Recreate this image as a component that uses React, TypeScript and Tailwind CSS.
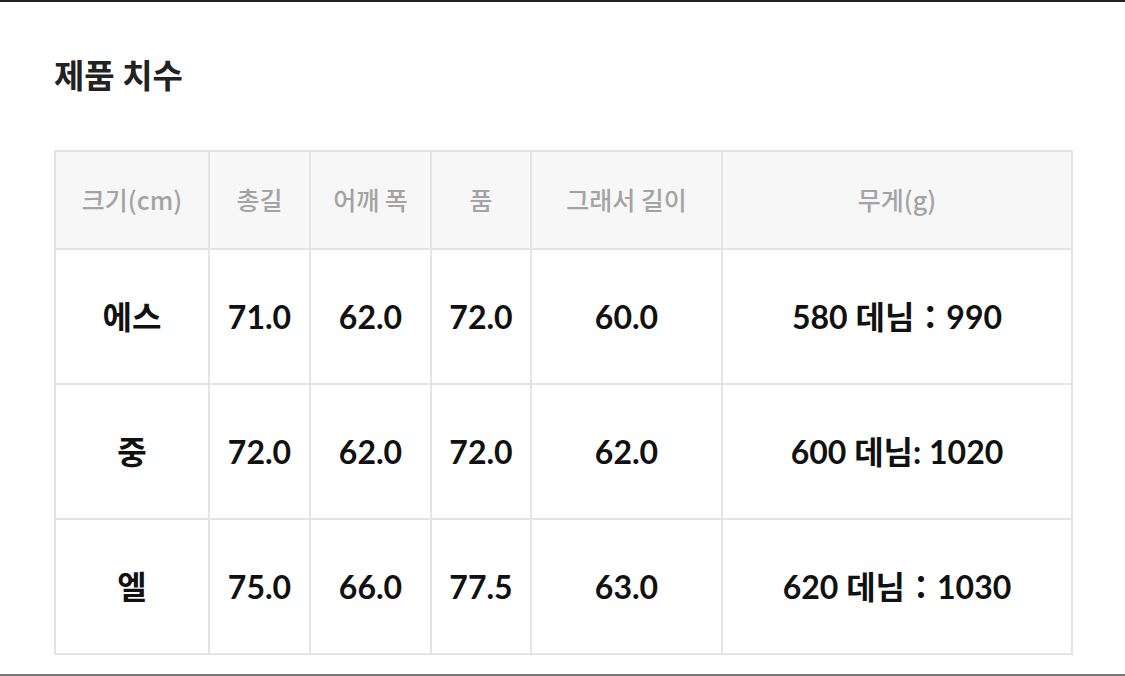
const headers = ["크기(cm)", "총길", "어깨 폭", "품", "그래서 길이", "무게(g)"];
const widths = ["w-[154px]", "w-[101px]", "w-[121px]", "w-[100px]", "w-[191px]", "w-[350px]"];

const rows = [
  ["에스", "71.0", "62.0", "72.0", "60.0", "580 데님：990"],
  ["중", "72.0", "62.0", "72.0", "62.0", "600 데님: 1020"],
  ["엘", "75.0", "66.0", "77.5", "63.0", "620 데님：1030"],
];

export default function App() {
  return (
    <div
      className="h-[676px] w-[1125px] overflow-hidden bg-white border-t-2 border-[#222] flex flex-col"
      style={{ fontFamily: 'Lato, "Noto Sans CJK KR", sans-serif' }}
    >
      <div className="flex-1 pl-[54px] pt-[53px]">
        <h2 className="text-[33px] leading-[38px] font-bold text-[#222] font-['Noto_Sans_CJK_KR',sans-serif]">
          제품 치수
        </h2>

        <table className="mt-[57px] table-fixed border-collapse w-[1018px]">
          <thead>
            <tr className="h-[98px] bg-[#f7f7f7]">
              {headers.map((h, i) => (
                <th
                  key={h}
                  className={`${widths[i]} border-2 border-[#e4e4e4] text-[25px] font-medium text-[#a3a3a3] text-center font-['Noto_Sans_CJK_KR',sans-serif]`}
                >
                  {h}
                </th>
              ))}
            </tr>
          </thead>
          <tbody>
            {rows.map((r) => (
              <tr key={r[0]} className="h-[135px]">
                {r.map((c, i) => (
                  <td
                    key={i}
                    className="border-2 border-[#e4e4e4] text-[32px] font-bold text-[#111] text-center"
                  >
                    {c}
                  </td>
                ))}
              </tr>
            ))}
          </tbody>
        </table>
      </div>
      <div className="h-[2px] bg-[#7a7a7a]" />
    </div>
  );
}
